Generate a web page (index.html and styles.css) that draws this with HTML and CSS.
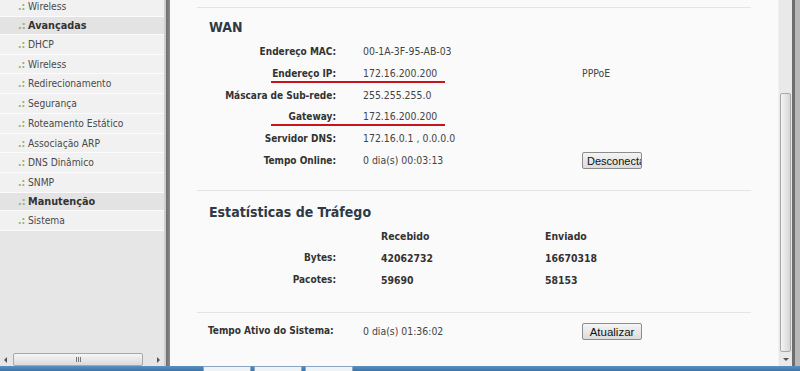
FILE: index.html
```html
<!DOCTYPE html>
<html lang="pt-BR">
<head>
    <meta charset="UTF-8">
    <meta name="viewport" content="width=device-width, initial-scale=1.0">
    <title>Status</title>
    <link rel="stylesheet" href="styles.css">
</head>
<body>
    <div class="window">
        <div class="sidebar">
            <ul class="menu">
                <li class="item">Wireless</li>
                <li class="item group">Avançadas</li>
                <li class="item">DHCP</li>
                <li class="item">Wireless</li>
                <li class="item">Redirecionamento</li>
                <li class="item">Segurança</li>
                <li class="item">Roteamento Estático</li>
                <li class="item">Associação ARP</li>
                <li class="item">DNS Dinâmico</li>
                <li class="item">SNMP</li>
                <li class="item group">Manutenção</li>
                <li class="item">Sistema</li>
            </ul>
            <div class="hscroll">
                <span class="arrow-left"></span>
                <span class="hthumb"><span class="grip"></span></span>
                <span class="arrow-right"></span>
            </div>
        </div>
        <div class="frame-edge"></div>
        <div class="main">
            <div class="content">
                <div class="rule"></div>
                <h2 class="title">WAN</h2>
                <div class="info">
                    <div class="row">
                        <span class="label">Endereço MAC:</span>
                        <span class="value">00-1A-3F-95-AB-03</span>
                        <span class="extra"></span>
                    </div>
                    <div class="row marked">
                        <span class="label">Endereço IP:</span>
                        <span class="value">172.16.200.200</span>
                        <span class="extra">PPPoE</span>
                    </div>
                    <div class="row">
                        <span class="label">Máscara de Sub-rede:</span>
                        <span class="value">255.255.255.0</span>
                        <span class="extra"></span>
                    </div>
                    <div class="row marked">
                        <span class="label">Gateway:</span>
                        <span class="value">172.16.200.200</span>
                        <span class="extra"></span>
                    </div>
                    <div class="row">
                        <span class="label">Servidor DNS:</span>
                        <span class="value">172.16.0.1 , 0.0.0.0</span>
                        <span class="extra"></span>
                    </div>
                    <div class="row">
                        <span class="label">Tempo Online:</span>
                        <span class="value">0 dia(s) 00:03:13</span>
                        <span class="extra"><button class="btn btn-cut"><span>Desconectar</span></button></span>
                    </div>
                </div>

                <div class="rule rule-mid"></div>
                <h2 class="title">Estatísticas de Tráfego</h2>
                <div class="stats">
                    <span class="label"></span>
                    <span class="num">Recebido</span>
                    <span class="num">Enviado</span>
                    <span class="label">Bytes:</span>
                    <span class="num">42062732</span>
                    <span class="num">16670318</span>
                    <span class="label">Pacotes:</span>
                    <span class="num">59690</span>
                    <span class="num">58153</span>
                </div>

                <div class="rule rule-low"></div>
                <div class="uptime">
                    <span class="label">Tempo Ativo do Sistema:</span>
                    <span class="value">0 dia(s) 01:36:02</span>
                    <span class="extra"><button class="btn">Atualizar</button></span>
                </div>
            </div>
            <div class="vscroll">
                <span class="vthumb"></span>
                <span class="arrow-down"></span>
            </div>
            <div class="outer-edge"></div>
        </div>
    </div>
    <div class="taskbar">
        <span class="task"></span>
        <span class="task"></span>
        <span class="task"></span>
    </div>
</body>
</html>
```

FILE: styles.css
```css
body, html {
    margin: 0;
    padding: 0;
    height: 100%;
    overflow: hidden;
}
body {
    font-family: "DejaVu Sans", sans-serif;
    font-size: 10.4px;
    font-stretch: condensed;
    color: #333;
    background: #fafafa;
}
.window {
    display: flex;
    height: 366px;
}

/* SIDEBAR */
.sidebar {
    width: 164px;
    background: #e6e6e6;
    border-right: 2px solid #cfcfcf;
    display: flex;
    flex-direction: column;
    overflow: hidden;
}
.menu {
    list-style: none;
    margin: -3px 0 0 0;
    padding: 0;
    flex: 1;
}
.item {
    height: 19.7px;
    line-height: 19.7px;
    padding-left: 28px;
    position: relative;
    background: #f1f1f1;
    border-bottom: 1px solid #fbfbfb;
    box-sizing: border-box;
    color: #4a4a4a;
    font-size: 10.2px;
}
.item::before {
    content: ".:";
    position: absolute;
    left: 18px;
    color: #9bb07a;
    font-weight: bold;
}
.group {
    height: 18.4px;
    line-height: 18.4px;
    background: #e3e3e3;
    font-weight: bold;
    color: #333;
    font-size: 10.8px;
}
.hscroll {
    height: 13px;
    display: flex;
    align-items: center;
    padding: 0 2px;
    gap: 4px;
}
.arrow-left, .arrow-right {
    width: 0;
    height: 0;
    border-top: 3px solid transparent;
    border-bottom: 3px solid transparent;
    margin: 0 2px;
}
.arrow-left { border-right: 3px solid #555; }
.arrow-right { border-left: 3px solid #555; margin-left: auto; }
.hthumb {
    width: 128px;
    height: 11px;
    border: 1px solid #a8a8a8;
    border-radius: 2px;
    background: linear-gradient(#f6f6f6, #dadada);
    display: flex;
    justify-content: center;
    align-items: center;
}
.grip {
    width: 5px;
    height: 5px;
    border-left: 1px solid #777;
    border-right: 1px solid #777;
    box-sizing: border-box;
    position: relative;
}
.grip::after {
    content: "";
    position: absolute;
    left: 1px;
    width: 1px;
    height: 5px;
    background: #777;
}
.frame-edge {
    width: 4px;
    background: linear-gradient(90deg, #6e6e6e, #8a8a8a);
}

/* MAIN */
.main {
    flex: 1;
    display: flex;
    background: #fafafa;
}
.content {
    flex: 1;
    padding: 7px 27px 0 27px;
}
.rule {
    height: 1px;
    background: #e4e4e4;
}
.title {
    margin: 10px 0 0 12px;
    font-size: 14px;
    line-height: 18px;
    color: #2e3a46;
}
.info {
    margin-top: 5px;
}
.row, .uptime {
    display: grid;
    grid-template-columns: 139px 244px 1fr;
    height: 21.8px;
    line-height: 21.8px;
    position: relative;
}
.label {
    text-align: right;
    font-weight: bold;
    font-size: 10px;
    white-space: nowrap;
    color: #333;
}
.value {
    padding-left: 27px;
    color: #444;
}
.extra {
    color: #444;
    padding-left: 2px;
}
.marked::after {
    content: "";
    position: absolute;
    left: 74px;
    width: 174px;
    top: 18px;
    height: 2px;
    background: #c8141e;
}
.btn {
    font-family: "Liberation Sans", sans-serif;
    font-stretch: normal;
    font-size: 11.5px;
    height: 17px;
    width: 60px;
    padding: 0;
    border: 1px solid #8c8c8c;
    border-radius: 2px;
    background: linear-gradient(#f4f4f4, #dcdcdc);
    color: #111;
    overflow: hidden;
    vertical-align: middle;
}
.btn-cut span {
    display: block;
    width: 80px;
    text-align: left;
    padding-left: 4px;
    font-size: 11px;
}
.rule-mid {
    margin-top: 18px;
}
.rule-mid + .title {
    margin-top: 12px;
}
.stats {
    display: grid;
    grid-template-columns: 139px 164px 1fr;
    margin-top: 4px;
}
.stats span {
    height: 22px;
    line-height: 22px;
}
.num {
    padding-left: 45px;
    font-weight: bold;
    color: #333;
}
.rule-low {
    margin-top: 21px;
}
.uptime {
    margin-top: 7px;
    height: 22px;
    line-height: 22px;
}
.uptime .label {
    text-align: left;
    padding-left: 11px;
}

/* RIGHT SCROLLBAR */
.vscroll {
    width: 13px;
    background: #e9e9e9;
    border-left: 1px solid #f2f2f2;
    display: flex;
    flex-direction: column;
    align-items: center;
}
.vthumb {
    margin-top: 93px;
    width: 11px;
    height: 259px;
    border: 1px solid #a8a8a8;
    border-radius: 2px;
    background: linear-gradient(90deg, #f4f4f4, #d6d6d6);
    box-sizing: border-box;
}
.arrow-down {
    margin-top: 6px;
    width: 0;
    height: 0;
    border-left: 3px solid transparent;
    border-right: 3px solid transparent;
    border-top: 3px solid #555;
}
.outer-edge {
    width: 8px;
    background: linear-gradient(90deg, #6e6e6e 0, #6e6e6e 3px, #b8b8b8 3px);
}

/* TASKBAR */
.taskbar {
    height: 5px;
    background: linear-gradient(#5b8fbf, #3c74a8);
    display: flex;
    padding-left: 203px;
    gap: 3px;
}
.task {
    width: 48px;
    height: 5px;
    background: #eef3f8;
    border: 1px solid #8aa6c2;
    border-bottom: 0;
    box-sizing: border-box;
}
```
